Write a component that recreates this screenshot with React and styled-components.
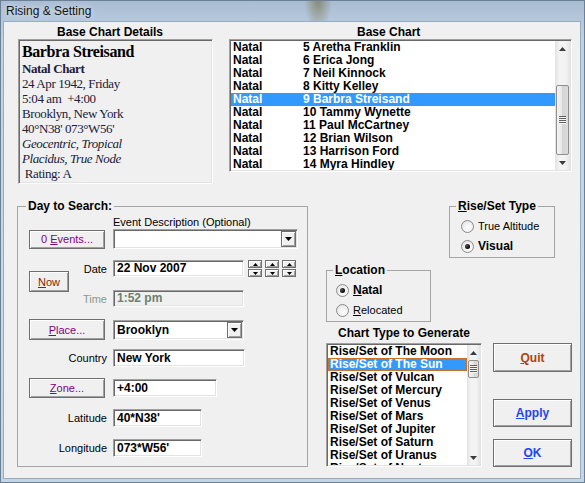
import React from "react";
import styled, { createGlobalStyle, css } from "styled-components";

const GlobalStyle = createGlobalStyle`
  html, body {
    margin: 0;
    padding: 0;
  }
  body {
    width: 585px;
    height: 483px;
    overflow: hidden;
    background: #c3d3e4;
    font-family: "Liberation Sans", Arial, sans-serif;
  }
`;

const sunken = css`
  box-sizing: border-box;
  border: 1px solid;
  border-color: #a0a0a0 #ffffff #ffffff #a0a0a0;
  box-shadow: inset 1px 1px 0 #696969, inset -1px -1px 0 #e3e3e3;
`;

const raised = css`
  box-sizing: border-box;
  border: 1px solid #6f6f6f;
  background: #f0f0f0;
  box-shadow: inset 1px 1px 0 #ffffff, inset -1px -1px 0 #a0a0a0;
`;

const Frame = styled.div`
  width: 585px;
  height: 483px;
  box-sizing: border-box;
  display: flex;
  flex-direction: column;
  padding: 0 5px 5px 4px;
  background:
    radial-gradient(ellipse 14px 30px at 318px 0, rgba(110, 95, 40, 0.55), transparent),
    linear-gradient(to bottom, #a8bcd2 0, #c0d1e3 8%, #c9d8e7 60%, #c4d5e6 100%);
  box-shadow: inset 0 0 0 1px #6b7f96;
`;

const TitleBar = styled.div`
  height: 22px;
  display: flex;
  align-items: center;
  padding-left: 2px;
  font-size: 12px;
  color: #141414;
  text-shadow: 0 0 6px rgba(255, 255, 255, 0.9);
`;

const Client = styled.div`
  flex: 1;
  background: #f0f0f0;
  box-shadow: 0 0 0 1px #97abc1;
  display: flex;
  flex-direction: column;
`;

const TopRow = styled.div`
  display: flex;
  margin-top: 3px;
  padding-left: 14px;
`;

const Column = styled.div`
  display: flex;
  flex-direction: column;
  width: ${p => p.$w}px;
  margin-left: ${p => p.$ml || 0}px;
`;

const Heading = styled.div`
  height: 14px;
  line-height: 14px;
  padding-left: ${p => p.$pl}px;
  font-weight: bold;
  font-size: 12px;
  color: #000;
  white-space: nowrap;
`;

const DetailsBox = styled.div`
  ${sunken}
  height: 145px;
  padding: 2px 0 0 3px;
  font-family: "Liberation Serif", "Times New Roman", serif;
  color: #20203a;
  letter-spacing: -0.4px;
`;

const DetailLine = styled.div`
  height: ${p => (p.$big ? 19 : 15)}px;
  line-height: ${p => (p.$big ? 19 : 15)}px;
  font-size: ${p => (p.$big ? 16 : 13)}px;
  font-weight: ${p => (p.$bold ? "bold" : "normal")};
  font-style: ${p => (p.$italic ? "italic" : "normal")};
  color: ${p => (p.$big ? "#000" : "inherit")};
  white-space: pre;
`;

const ListBox = styled.div`
  ${sunken}
  width: ${p => p.$w}px;
  height: ${p => p.$h}px;
  background: #fff;
  padding: 1px;
  display: flex;
  overflow: hidden;
`;

const ListRows = styled.div`
  flex: 1;
  overflow: hidden;
`;

const ListRow = styled.div`
  display: flex;
  box-sizing: border-box;
  height: 13px;
  line-height: 13px;
  padding-left: 2px;
  font-weight: bold;
  font-size: 12px;
  white-space: nowrap;
  background: ${p => (p.$selected ? "#3399ff" : "transparent")};
  color: ${p => (p.$selected ? "#fff" : "#000")};
  outline: ${p => (p.$focus ? "1px dotted #c8702a" : "none")};
  outline-offset: -1px;
`;

const KindCell = styled.span`
  width: 70px;
`;

const ScrollBar = styled.div`
  width: ${p => p.$w}px;
  display: flex;
  flex-direction: column;
  background: linear-gradient(to right, #e2e2e2, #f3f3f3 30%, #f3f3f3 70%, #e4e4e4);
`;

const ScrollArrow = styled.div`
  height: 15px;
  display: flex;
  align-items: center;
  justify-content: center;
`;

const Track = styled.div`
  flex: 1;
  display: flex;
  flex-direction: column;
  align-items: center;
`;

const Thumb = styled.div`
  box-sizing: border-box;
  width: calc(100% - 2px);
  margin-top: ${p => p.$top}px;
  height: ${p => p.$h}px;
  border: 1px solid #8f8f8f;
  border-radius: 2px;
  background: linear-gradient(to right, #f4f4f4, #e6e6e6 50%, #d4d4d4 50%, #dcdcdc);
  display: flex;
  align-items: center;
  justify-content: center;
`;

const Grip = styled.div`
  width: 7px;
  height: 8px;
  background: repeating-linear-gradient(to bottom, #5f5f5f 0 1px, #f6f6f6 1px 2px);
`;

const BottomRow = styled.div`
  display: flex;
  margin-top: 22px;
`;

const Group = styled.div`
  position: relative;
  box-sizing: border-box;
  width: ${p => p.$w}px;
  height: ${p => (p.$h ? `${p.$h}px` : "auto")};
  margin-left: ${p => p.$ml || 0}px;
  margin-top: ${p => p.$mt || 0}px;
  border: 1px solid #a5a5a5;
  display: flex;
  flex-direction: column;
  padding: ${p => p.$pad};
`;

const Legend = styled.span`
  position: absolute;
  top: -8px;
  left: ${p => p.$left}px;
  padding: 0 2px;
  background: #f0f0f0;
  line-height: 14px;
  font-weight: bold;
  font-size: 12px;
  color: #000;
`;

const Row = styled.div`
  display: flex;
  align-items: ${p => p.$align || "center"};
  margin-top: ${p => p.$mt || 0}px;
  height: ${p => (p.$h ? `${p.$h}px` : "auto")};
`;

const SmallLabel = styled.span`
  font-size: 11px;
  line-height: 13px;
  height: 13px;
  margin-left: ${p => p.$ml || 0}px;
  color: #000;
  white-space: nowrap;
`;

const FieldLabel = styled.span`
  width: ${p => p.$w}px;
  margin-right: 6px;
  text-align: right;
  font-size: 11px;
  color: ${p => p.$color || "#000"};
  white-space: nowrap;
`;

const Button = styled.button`
  ${raised}
  width: ${p => p.$w}px;
  height: ${p => p.$h}px;
  margin-top: ${p => p.$mt || 0}px;
  margin-right: ${p => p.$mr || 0}px;
  padding: 0;
  font-family: "Liberation Sans", Arial, sans-serif;
  font-size: ${p => (p.$bold ? 12 : 11)}px;
  font-weight: ${p => (p.$bold ? "bold" : "normal")};
  color: ${p => p.$color};
  flex-shrink: 0;
  u {
    text-decoration: underline;
  }
`;

const TextBox = styled.div`
  ${sunken}
  width: ${p => p.$w}px;
  height: ${p => p.$h || 18}px;
  background: ${p => (p.$disabled ? "#f0f0f0" : "#fff")};
  color: ${p => (p.$disabled ? "#6d806d" : "#000")};
  padding: 0 0 0 3px;
  font-weight: bold;
  font-size: 12px;
  line-height: ${p => (p.$h || 18) - 2}px;
  white-space: nowrap;
  flex-shrink: 0;
`;

const ComboBox = styled.div`
  ${sunken}
  width: ${p => p.$w}px;
  height: 20px;
  padding: 1px;
  background: #fff;
  display: flex;
  flex-shrink: 0;
`;

const ComboText = styled.div`
  flex: 1;
  padding-left: 2px;
  font-weight: bold;
  font-size: 12px;
  line-height: 16px;
`;

const DropButton = styled.div`
  ${raised}
  width: 15px;
  height: 16px;
  display: flex;
  align-items: center;
  justify-content: center;
`;

const Spinners = styled.div`
  display: flex;
  gap: 3px;
  margin-left: 4px;
`;

const SpinPair = styled.div`
  display: flex;
  flex-direction: column;
  gap: 1px;
`;

const SpinButton = styled.div`
  ${raised}
  width: 14px;
  height: 8px;
  display: flex;
  align-items: center;
  justify-content: center;
`;

const RightArea = styled.div`
  display: flex;
  flex-direction: column;
  margin-left: 18px;
  width: 246px;
`;

const RadioRow = styled.div`
  display: flex;
  align-items: center;
  height: 16px;
  margin-top: ${p => p.$mt || 0}px;
  font-size: ${p => (p.$bold ? 12 : 11)}px;
  font-weight: ${p => (p.$bold ? "bold" : "normal")};
  color: #000;
  white-space: nowrap;
`;

const RadioCircle = styled.span`
  box-sizing: border-box;
  width: 13px;
  height: 13px;
  margin-right: 4px;
  border-radius: 50%;
  border: 1px solid #8a8a8a;
  background: radial-gradient(circle at 60% 65%, #ffffff 0, #eeeeee 55%, #d6d6d6 100%);
  display: flex;
  align-items: center;
  justify-content: center;
`;

const RadioDot = styled.span`
  width: 5px;
  height: 5px;
  border-radius: 50%;
  background: radial-gradient(circle at 35% 35%, #555 0, #000 70%);
`;

const CaptionLabel = styled.div`
  margin-top: 5px;
  margin-left: 12px;
  height: 13px;
  line-height: 13px;
  font-weight: bold;
  font-size: 12px;
  color: #000;
`;

const BottomSplit = styled.div`
  display: flex;
  margin-top: 3px;
`;

const ButtonColumn = styled.div`
  display: flex;
  flex-direction: column;
  margin-left: 11px;
`;

const Triangle = ({ down, w = 7, h = 4, color = "#3c3c3c" }) => (
  <svg width={w} height={h} viewBox={`0 0 ${w} ${h}`}>
    {down ? (
      <polygon points={`0,0 ${w},0 ${w / 2},${h}`} fill={color} />
    ) : (
      <polygon points={`0,${h} ${w},${h} ${w / 2},0`} fill={color} />
    )}
  </svg>
);

const VScroll = ({ width, thumbTop, thumbH }) => (
  <ScrollBar $w={width}>
    <ScrollArrow>
      <Triangle />
    </ScrollArrow>
    <Track>
      <Thumb $top={thumbTop} $h={thumbH}>
        <Grip />
      </Thumb>
    </Track>
    <ScrollArrow>
      <Triangle down />
    </ScrollArrow>
  </ScrollBar>
);

const Radio = ({ checked, bold, mt, children }) => (
  <RadioRow $bold={bold} $mt={mt}>
    <RadioCircle>{checked && <RadioDot />}</RadioCircle>
    {children}
  </RadioRow>
);

const Combo = ({ w, value }) => (
  <ComboBox $w={w}>
    <ComboText>{value}</ComboText>
    <DropButton>
      <Triangle down w={7} h={4} color="#000" />
    </DropButton>
  </ComboBox>
);

const baseCharts = [
  "5 Aretha Franklin",
  "6 Erica Jong",
  "7 Neil Kinnock",
  "8 Kitty Kelley",
  "9 Barbra Streisand",
  "10 Tammy Wynette",
  "11 Paul McCartney",
  "12 Brian Wilson",
  "13 Harrison Ford",
  "14 Myra Hindley",
];

const chartTypes = [
  "The Moon",
  "The Sun",
  "Vulcan",
  "Mercury",
  "Venus",
  "Mars",
  "Jupiter",
  "Saturn",
  "Uranus",
  "Neptune",
];

export default function App() {
  return (
    <>
      <GlobalStyle />
      <Frame>
        <TitleBar>Rising &amp; Setting</TitleBar>
        <Client>
          <TopRow>
            <Column $w={195}>
              <Heading $pl={39}>Base Chart Details</Heading>
              <DetailsBox>
                <DetailLine $big $bold>Barbra Streisand</DetailLine>
                <DetailLine $bold>Natal Chart</DetailLine>
                <DetailLine>24 Apr 1942, Friday</DetailLine>
                <DetailLine>5:04 am  +4:00</DetailLine>
                <DetailLine>Brooklyn, New York</DetailLine>
                <DetailLine>40°N38' 073°W56'</DetailLine>
                <DetailLine $italic>Geocentric, Tropical</DetailLine>
                <DetailLine $italic>Placidus, True Node</DetailLine>
                <DetailLine> Rating: A</DetailLine>
              </DetailsBox>
            </Column>
            <Column $w={343} $ml={16}>
              <Heading $pl={128}>Base Chart</Heading>
              <ListBox $w={343} $h={133}>
                <ListRows>
                  {baseCharts.map(name => (
                    <ListRow key={name} $selected={name === "9 Barbra Streisand"}>
                      <KindCell>Natal</KindCell>
                      <span>{name}</span>
                    </ListRow>
                  ))}
                </ListRows>
                <VScroll width={15} thumbTop={29} thumbH={70} />
              </ListBox>
            </Column>
          </TopRow>

          <BottomRow>
            <Group $w={291} $ml={13} $pad="0 0 9px 11px">
              <Legend $left={8}>Day to Search:</Legend>
              <Row $mt={9}>
                <SmallLabel $ml={84}>Event Description (Optional)</SmallLabel>
              </Row>
              <Row $h={20}>
                <Button $w={76} $h={19} $mr={8} $color="#800080">
                  0 <u>E</u>vents...
                </Button>
                <Combo w={185} value="" />
              </Row>
              <Row $mt={11} $align="flex-start">
                <Button $w={40} $h={21} $mt={11} $color="#802800">
                  <u>N</u>ow
                </Button>
                <Column>
                  <Row $h={17}>
                    <FieldLabel $w={38}>Date</FieldLabel>
                    <TextBox $w={131} $h={17}>22 Nov 2007</TextBox>
                    <Spinners>
                      {[0, 1, 2].map(i => (
                        <SpinPair key={i}>
                          <SpinButton>
                            <Triangle w={5} h={3} color="#000" />
                          </SpinButton>
                          <SpinButton>
                            <Triangle down w={5} h={3} color="#000" />
                          </SpinButton>
                        </SpinPair>
                      ))}
                    </Spinners>
                  </Row>
                  <Row $h={17} $mt={13}>
                    <FieldLabel $w={38} $color="#8a9a8a">Time</FieldLabel>
                    <TextBox $w={131} $h={17} $disabled>1:52 pm</TextBox>
                  </Row>
                </Column>
              </Row>
              <Row $mt={12} $h={21}>
                <Button $w={76} $h={21} $mr={8} $color="#800080">
                  <u>P</u>lace...
                </Button>
                <Combo w={131} value="Brooklyn" />
              </Row>
              <Row $mt={9} $h={18}>
                <FieldLabel $w={78}>Country</FieldLabel>
                <TextBox $w={132}>New York</TextBox>
              </Row>
              <Row $mt={11} $h={20}>
                <Button $w={76} $h={20} $mr={8} $color="#800080">
                  <u>Z</u>one...
                </Button>
                <TextBox $w={104}>+4:00</TextBox>
              </Row>
              <Row $mt={11} $h={18}>
                <FieldLabel $w={78}>Latitude</FieldLabel>
                <TextBox $w={89}>40*N38'</TextBox>
              </Row>
              <Row $mt={12} $h={18}>
                <FieldLabel $w={78}>Longitude</FieldLabel>
                <TextBox $w={89}>073*W56'</TextBox>
              </Row>
            </Group>

            <RightArea>
              <Group $w={106} $h={52} $ml={123} $pad="11px 0 0 11px">
                <Legend $left={6}>
                  <u>R</u>ise/Set Type
                </Legend>
                <Radio>True Altitude</Radio>
                <Radio checked bold mt={4}>Visual</Radio>
              </Group>
              <Group $w={105} $h={52} $mt={12} $pad="11px 0 0 9px">
                <Legend $left={6}>
                  <u>L</u>ocation
                </Legend>
                <Radio checked bold>
                  <u>N</u>atal
                </Radio>
                <Radio mt={4}>
                  <u>R</u>elocated
                </Radio>
              </Group>
              <CaptionLabel>Chart Type to Generate</CaptionLabel>
              <BottomSplit>
                <ListBox $w={156} $h={124}>
                  <ListRows>
                    {chartTypes.map(body => (
                      <ListRow
                        key={body}
                        $selected={body === "The Sun"}
                        $focus={body === "The Sun"}
                      >
                        Rise/Set of {body}
                      </ListRow>
                    ))}
                  </ListRows>
                  <VScroll width={13} thumbTop={0} thumbH={18} />
                </ListBox>
                <ButtonColumn>
                  <Button $w={79} $h={29} $bold $color="#b04000">
                    <u>Q</u>uit
                  </Button>
                  <Button $w={79} $h={28} $mt={27} $bold $color="#2244ee">
                    <u>A</u>pply
                  </Button>
                  <Button $w={79} $h={28} $mt={12} $bold $color="#2244ee">
                    <u>O</u>K
                  </Button>
                </ButtonColumn>
              </BottomSplit>
            </RightArea>
          </BottomRow>
        </Client>
      </Frame>
    </>
  );
}
